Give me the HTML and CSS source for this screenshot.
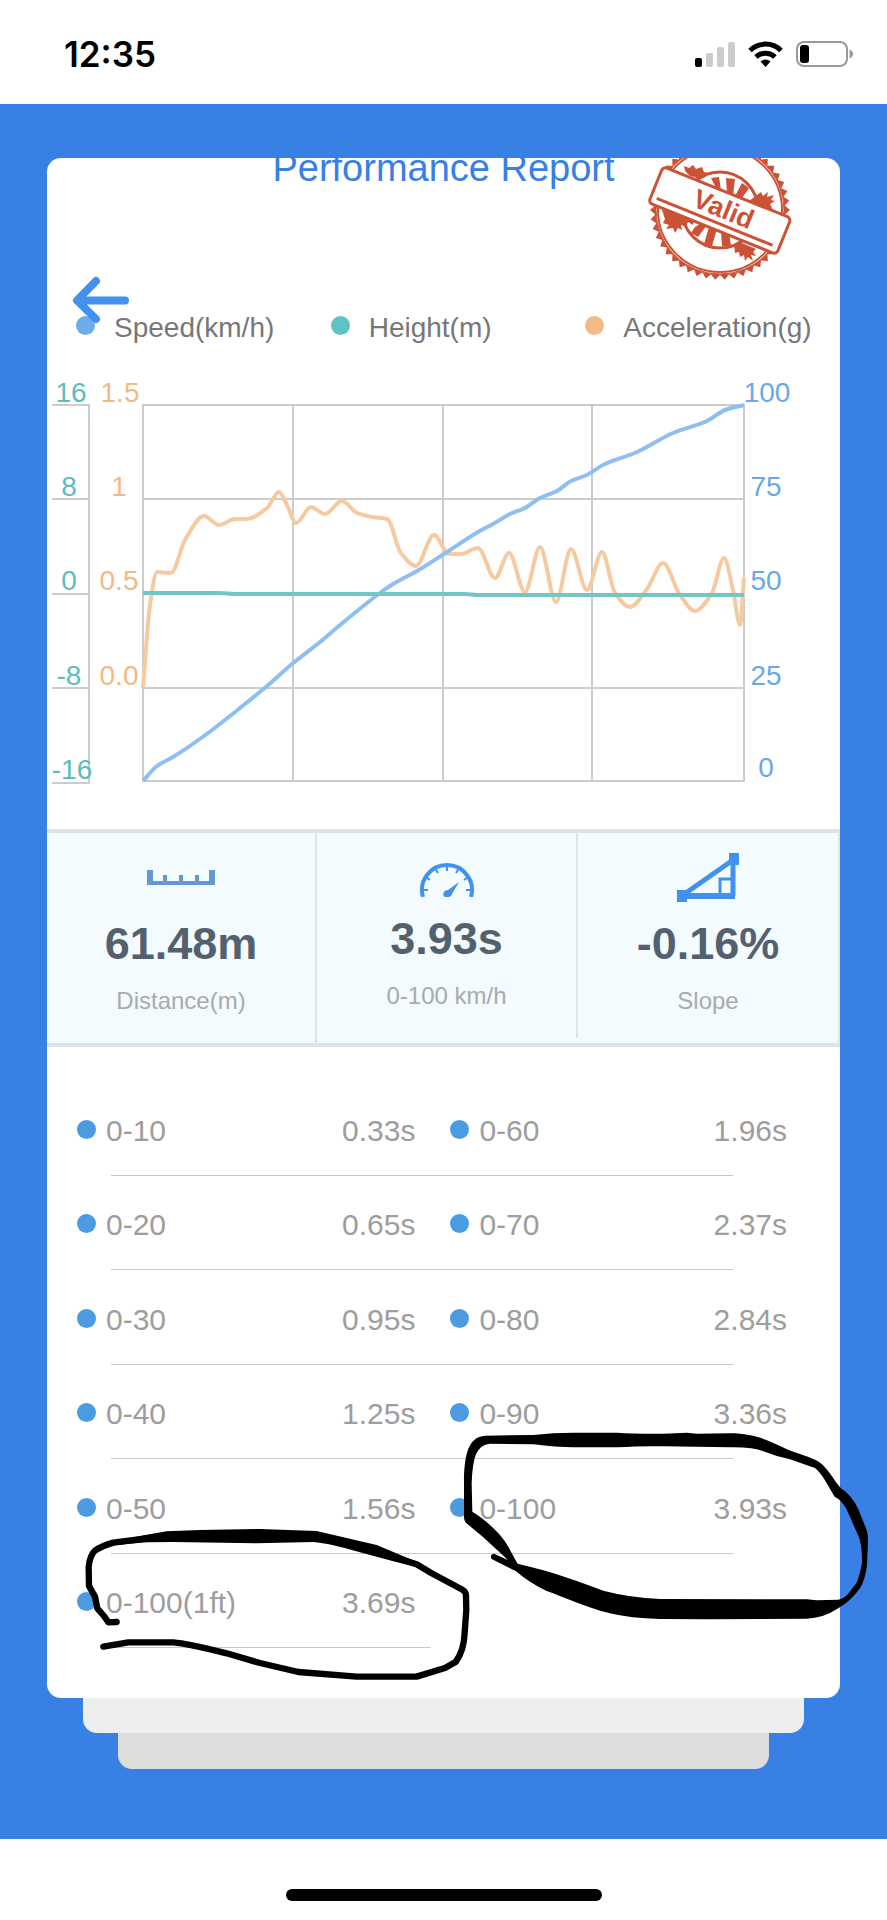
FILE: index.html
```html
<!DOCTYPE html>
<html lang="en">
<head>
    <meta charset="UTF-8">
    <meta name="viewport" content="width=device-width, initial-scale=1.0">
    <title>Performance Report</title>
    <link rel="stylesheet" href="styles.css">
</head>
<body>
    <div class="status-bar">
        <span class="time">12:35</span>
        <svg class="status-icons" width="160" height="28" viewBox="0 0 160 28" aria-hidden="true">
            <rect x="1" y="18" width="7" height="9" rx="2"/>
            <g fill="#ccc">
                <rect x="12" y="13" width="7" height="14" rx="2"/>
                <rect x="23" y="7" width="7" height="20" rx="2"/>
                <rect x="34" y="2" width="7" height="25" rx="2"/>
            </g>
            <g fill="none" stroke="#000" stroke-width="5">
                <path d="M56 10.500a22 22 0 0 1 31 0"/>
                <path d="M62 17a14 14 0 0 1 19 0"/>
            </g>
            <path d="M66.500 21.500a8 8 0 0 1 10 0L71.500 27z"/>
            <rect x="103" y="2" width="50" height="24" rx="7" fill="none" stroke="#999" stroke-width="2"/>
            <path d="M155.500 9.500q3.500 1.500 3.500 4.500t-3.500 4.500z" fill="#999"/>
            <rect x="106" y="5" width="9" height="18" rx="3"/>
        </svg>
    </div>

    <main class="screen">
        <div class="card">
            <header class="card-header">
                <h1>Performance Report</h1>
                <svg class="stamp" width="144" height="144" viewBox="-72 -72 144 144" role="img" aria-label="Valid">
                    <path id="stamp-edge" fill="#cc5237"/>
                    <g fill="none" stroke="#cc5237">
                        <circle r="64" fill="#fff" stroke-width="1"/>
                        <circle r="62" stroke-width="2"/>
                        <circle r="38" stroke-width="3"/>
                    </g>
                    <g fill="#cc5237">
                        <path d="M-9-32l8-1 2 13-5-2zM6-32l9 1-2 17-6-3zM22-27l7 5-9 13-6-3zM-25 17l8-5 4 3-9 12-7-4zM-11 17l8 2-5 17-8-2zM1 22h8l2 14H2z"/>
                        <path d="M-36-44l5 2 4-3 3 4 6-2 2 5 5 1-4 4-6 3-4-3-5-1-5-5zM37-15l4-3 2 4 5-4-1 5 7-2-3 5 4 1-5 3 3 6-4-1 1 8-6-3-11-5-4-8z"/>
                        <path d="M-58 0l8 1 12 5 12 4-1 5-5-3-2 5-5-2 1 5-4-2-3 5-2-5-7 1 3-4-6-2 2-4zM14 34l8-1 14 6-3 3 3 4-5-1 2 6-5-4-3 4-1-6-4 2-1-5-4 1z"/>
                    </g>
                    <g transform="rotate(22)">
                        <rect x="-69" y="-19" width="138" height="39" rx="4" fill="#fff" stroke="#cc5237" stroke-width="3"/>
                        <path d="M-63 13H62" stroke="#cc5237" stroke-width="3" fill="none"/>
                        <text class="stamp-text" x="3" y="7">Valid</text>
                    </g>
                </svg>
            </header>

            <button class="back" type="button" aria-label="Back">
                <svg width="58" height="50" viewBox="0 0 58 50" aria-hidden="true">
                    <path d="M24 5L5 24.500 24 43M6 24.500H53" fill="none" stroke="#4291ef" stroke-width="8" stroke-linecap="round" stroke-linejoin="round"/>
                </svg>
            </button>

            <ul class="legend">
                <li class="speed">Speed(km/h)</li>
                <li class="height">Height(m)</li>
                <li class="acceleration">Acceleration(g)</li>
            </ul>

            <svg class="chart" viewBox="0 0 793 469" role="img" aria-label="Speed, height and acceleration over time">
                <g class="grid">
                    <path d="M96 45H697V421H96zM246 45V421M396 45V421M545 45V421M96 139H697M96 234H697M96 328H697"/>
                    <path d="M5 45H42V423H5M5 139H42M5 234H42M5 328H42"/>
                </g>
                <g class="axis axis-height">
                    <text x="24" y="42">16</text>
                    <text x="22" y="136">8</text>
                    <text x="22" y="230">0</text>
                    <text x="22" y="325">-8</text>
                    <text x="25" y="419">-16</text>
                </g>
                <g class="axis axis-acceleration">
                    <text x="73" y="42">1.5</text>
                    <text x="72" y="136">1</text>
                    <text x="72" y="230">0.5</text>
                    <text x="72" y="325">0.0</text>
                </g>
                <g class="axis axis-speed">
                    <text x="720" y="42">100</text>
                    <text x="719" y="136">75</text>
                    <text x="719" y="230">50</text>
                    <text x="719" y="325">25</text>
                    <text x="719" y="417">0</text>
                </g>
                <path id="line-acceleration" class="line line-acceleration"/>
                <path id="line-speed" class="line line-speed"/>
                <path id="line-height" class="line line-height"/>
            </svg>

            <section class="stats">
                <div class="stat">
                    <svg width="68" height="50" viewBox="0 0 68 50" aria-hidden="true">
                        <path d="M3 31H65M18 23V31M34 23V31M50 23V31" fill="none" stroke="#6698d0" stroke-width="4"/>
                        <path d="M3 18V33M65 18V33" stroke="#6698d0" stroke-width="6"/>
                    </svg>
                    <strong>61.48m</strong>
                    <span>Distance(m)</span>
                </div>
                <div class="stat stat-main">
                    <svg width="56" height="45" viewBox="0 0 56 45" aria-hidden="true">
                        <path d="M4 45A25 25 0 1 1 52 45" fill="none" stroke="#4291ef" stroke-width="4"/>
                        <path d="M4 38H9M47 38H52M7 25L11 28M49 25L45 28M16 16L19 21M40 16L37 21M28 13V19" stroke="#4291ef" stroke-width="2"/>
                        <path d="M40 30L33 42Q32 45 30 45H26Q23 43 25 40Q26 38 29 38z" fill="#4291ef"/>
                    </svg>
                    <strong>3.93s</strong>
                    <span>0-100 km/h</span>
                </div>
                <div class="stat">
                    <svg width="62" height="50" viewBox="0 0 62 50" aria-hidden="true">
                        <path d="M6 43L56 8V44" fill="none" stroke="#4291ef" stroke-width="5"/>
                        <path d="M6 44H58" stroke="#4291ef" stroke-width="6"/>
                        <path d="M43 42V27H56" fill="none" stroke="#4291ef" stroke-width="3"/>
                        <path d="M52 1h10v12H52zM0 38h10v12H0z" fill="#4291ef"/>
                    </svg>
                    <strong>-0.16%</strong>
                    <span>Slope</span>
                </div>
            </section>

            <table class="times">
                <tbody>
                    <tr><th>0-10</th><td>0.33s</td><th>0-60</th><td>1.96s</td></tr>
                    <tr><th>0-20</th><td>0.65s</td><th>0-70</th><td>2.37s</td></tr>
                    <tr><th>0-30</th><td>0.95s</td><th>0-80</th><td>2.84s</td></tr>
                    <tr><th>0-40</th><td>1.25s</td><th>0-90</th><td>3.36s</td></tr>
                    <tr><th>0-50</th><td>1.56s</td><th>0-100</th><td>3.93s</td></tr>
                    <tr><th>0-100(1ft)</th><td>3.69s</td><td colspan="2"></td></tr>
                </tbody>
            </table>
        </div>
        <div class="sheet sheet-middle"></div>
        <div class="sheet sheet-back"></div>
    </main>

    <div class="home-area">
        <div class="home-indicator"></div>
    </div>

    <!-- Pen marks around the two 0-100 results -->
    <svg class="marks" viewBox="0 0 887 1920" aria-hidden="true">
        <g transform="translate(430 1400) scale(.3333)">
            <path fill-rule="evenodd" d="M102 350V250C102 165 115 110 165 107L310 105Q370 98 430 98L560 98Q620 102 700 101L770 98L800 101L900 100C1000 100 1040 140 1110 162Q1165 180 1178 194C1205 222 1215 245 1233 265Q1265 285 1285 328L1308 385Q1315 400 1314 430L1311 495Q1306 540 1290 565C1260 605 1240 615 1225 625Q1180 655 1130 656L830 658L690 657Q600 655 540 640C460 620 400 590 350 573Q300 550 258 514L185 477Q178 464 192 461L234 480Q190 440 160 412L112 372Q102 365 102 350zM127 335L125 250Q127 190 138 163Q150 134 180 131L310 133Q380 142 430 142H560Q640 137 700 139L900 142Q970 141 1000 154Q1040 170 1080 178L1155 204C1180 225 1195 260 1214 290Q1235 300 1250 328L1284 405Q1297 430 1296 490Q1288 530 1280 548L1254 582Q1245 594 1225 599L1160 601L1130 598L690 597Q600 593 520 572C460 550 370 515 263 491Q245 460 235 440C215 405 175 365 127 335z"/>
        </g>
        <g transform="translate(40 1500) scale(.3333)">
            <path d="M230 366L205 367L192 348L172 325L165 290L147 258L146 200Q150 165 165 152Q185 138 220 128L320 115L385 107L600 108L825 108L900 126L1000 145L1065 173L1130 193L1175 220L1265 268Q1278 275 1278 285L1279 330L1274 400Q1272 450 1248 485L1215 504L1130 530L950 530L775 516L660 489L560 460Q440 430 400 427H265L190 440" fill="none" stroke="#000" stroke-width="19" stroke-linecap="round" stroke-linejoin="round"/>
            <path d="M220 124L320 104L380 94L480 90L660 87L830 93L1010 135L1130 185L1120 199L1060 184L960 157Q870 130 820 126L650 130L400 126L320 127L220 136z"/>
        </g>
    </svg>

    <script src="chart.js"></script>
</body>
</html>
```
FILE: styles.css
```css
* {
    box-sizing: border-box;
}
body {
    position: relative;
    margin: 0;
    background-color: #fff;
    font-family: "Liberation Sans", Arial, sans-serif;
}
.status-bar {
    display: flex;
    justify-content: space-between;
    align-items: center;
    height: 104px;
    padding: 4px 33px 0 64px;
}
.time {
    font-family: Inter, sans-serif;
    font-size: 35px;
    font-weight: 600;
}
.screen {
    background-color: #3880e3;
    padding: 54px 47px 70px;
}
.card {
    position: relative;
    overflow: hidden;
    background-color: #fff;
    border-radius: 14px;
    padding-bottom: 50px;
}
.card-header {
    display: flow-root;
    height: 153px;
}
h1 {
    margin: -12px 0 0;
    color: #3880e3;
    font-size: 38px;
    font-weight: 400;
    line-height: 44px;
    text-align: center;
}
.stamp {
    position: absolute;
    top: -20px;
    right: 48px;
}
.stamp-text {
    fill: #cc5237;
    font-size: 27px;
    font-weight: 700;
    text-anchor: middle;
}
.back {
    position: absolute;
    top: 118px;
    left: 25px;
    padding: 0;
    border: none;
    background: none;
    line-height: 0;
    cursor: pointer;
}

/* Legend and chart */
.legend {
    display: grid;
    grid-template-columns: repeat(3, 1fr);
    margin: 0 0 16px;
    padding: 1px 0 0 29px;
    list-style: none;
    color: #777;
    font-size: 28px;
    line-height: 32px;
    white-space: nowrap;
}
.legend li::before {
    content: "";
    display: inline-block;
    width: 19px;
    height: 19px;
    margin-right: 19px;
    border-radius: 50%;
    vertical-align: 2px;
}
.speed::before {
    background-color: #6dace9;
}
.height::before {
    background-color: #5fc3c5;
}
.acceleration::before {
    background-color: #f3bb87;
}
.chart {
    display: block;
    width: 100%;
}
.grid {
    fill: none;
    stroke: #ccc;
    stroke-width: 2;
}
.axis {
    font-size: 28px;
    text-anchor: middle;
}
.axis-height {
    fill: #5bbdbd;
}
.axis-acceleration {
    fill: #f3b884;
}
.axis-speed {
    fill: #6ba8e5;
}
.line {
    fill: none;
    stroke-width: 4;
    stroke-linejoin: round;
}
.line-acceleration {
    stroke: #f6caa1;
}
.line-speed {
    stroke: #8fbff0;
}
.line-height {
    stroke: #74c6c6;
}

/* Summary */
.stats {
    display: grid;
    grid-template-columns: 270fr 261fr 262fr;
    border-top: 4px solid #dbe4e7;
    border-bottom: 4px solid #dbe4e7;
    background-color: #f3fbfe;
}
.stat {
    display: flex;
    flex-direction: column;
    align-items: center;
    padding: 19px 0 28px;
    border-right: 2px solid #dbe4e7;
}
.stat-main {
    margin-bottom: 5px;
}
.stat strong {
    margin-top: 18px;
    color: #53616f;
    font-size: 45px;
    line-height: 48px;
}
.stat span {
    margin-top: 19px;
    color: #aaa;
    font-size: 24px;
    line-height: 28px;
}

/* Split times */
.times {
    width: calc(100% - 83px);
    height: 567px;
    margin: 34px 53px 0 30px;
    border-collapse: collapse;
    table-layout: fixed;
    color: #9d9d9d;
    font-size: 30px;
    line-height: 36px;
    white-space: nowrap;
}
.times tr {
    background: linear-gradient(#c8c8c8, #c8c8c8) 34px 100% / calc(100% - 88px) 1px no-repeat;
}
.times tr:last-child {
    background-size: calc(50% - 35px) 1px;
}
.times th {
    padding: 5px 0 0;
    font-weight: 400;
    text-align: left;
}
.times th:first-child {
    width: 24%;
}
.times th::before {
    content: "";
    display: inline-block;
    width: 19px;
    height: 19px;
    margin-right: 10px;
    border-radius: 50%;
    background-color: #4a9be1;
    vertical-align: 2px;
}
.times th:nth-child(3) {
    padding-left: 35px;
}
.times td {
    width: 168px;
    padding: 5px 0 0;
    text-align: right;
}

/* Sheets stacked under the card */
.sheet {
    border-radius: 0 0 14px 14px;
}
.sheet-middle {
    height: 35px;
    margin: 0 36px;
    background-color: #eee;
}
.sheet-back {
    height: 36px;
    margin: 0 71px;
    background-color: #ddd;
}
.home-area {
    height: 81px;
    padding-top: 50px;
}
.home-indicator {
    width: 316px;
    height: 12px;
    margin: 0 auto;
    border-radius: 6px;
    background-color: #000;
}
.marks {
    position: absolute;
    top: 0;
    left: 0;
    width: 100%;
    pointer-events: none;
}
```
FILE: chart.js
```js
// Points in chart coordinates
const acceleration = [
    [96, 328], [103, 245], [110, 212], [124, 213], [138, 180], [157, 156], [172, 165], [188, 159],
    [200, 159], [220, 148], [232, 132], [240, 145], [249, 163], [264, 147], [278, 154],
    [295, 141], [310, 153], [325, 157], [340, 159], [354, 193], [369, 206], [387, 175], [402, 194],
    [414, 194], [431, 188], [448, 218], [462, 193], [478, 232], [493, 187], [509, 242],
    [524, 189], [540, 230], [555, 192], [568, 233], [583, 247], [600, 229], [616, 203],
    [633, 235], [648, 251], [665, 233], [677, 198], [686, 230], [693, 265], [697, 218]
];
const speed = [
    [96, 421], [110, 406], [126, 397], [157, 376], [193, 348], [220, 326], [245, 304],
    [273, 282], [293, 265], [333, 233], [346, 224], [370, 211], [400, 192], [431, 172],
    [446, 164], [463, 154], [478, 148], [493, 138], [510, 131], [524, 121], [540, 115],
    [556, 105], [590, 92], [626, 73], [660, 61], [678, 50], [697, 45]
];
const height = [[96, 233], [173, 233], [188, 234], [418, 234], [430, 235], [697, 235]];

// Smooth line through all the points, flat at peaks and dips
function smoothPath(points) {
    const slopes = points.map((point, i) => {
        const prev = points[i - 1];
        const next = points[i + 1];
        if (!prev) return (next[1] - point[1]) / (next[0] - point[0]);
        if (!next) return (point[1] - prev[1]) / (point[0] - prev[0]);
        const before = (point[1] - prev[1]) / (point[0] - prev[0]);
        const after = (next[1] - point[1]) / (next[0] - point[0]);
        return before * after <= 0 ? 0 : 2 * before * after / (before + after);
    });
    let d = `M${points[0]}`;
    for (let i = 0; i < points.length - 1; i++) {
        const [x1, y1] = points[i];
        const [x2, y2] = points[i + 1];
        const step = (x2 - x1) / 3;
        d += `C${x1 + step} ${y1 + slopes[i] * step} ${x2 - step} ${y2 - slopes[i + 1] * step} ${x2} ${y2}`;
    }
    return d;
}

document.getElementById('line-acceleration').setAttribute('d', smoothPath(acceleration));
document.getElementById('line-speed').setAttribute('d', smoothPath(speed));
document.getElementById('line-height').setAttribute('d', smoothPath(height));

// Toothed edge of the stamp
const teeth = 46;
const edge = [];
for (let i = 0; i < teeth * 2; i++) {
    const radius = i % 2 ? 65 : 70;
    const angle = Math.PI * i / teeth;
    edge.push([radius * Math.cos(angle), radius * Math.sin(angle)]);
}
document.getElementById('stamp-edge').setAttribute('d', `M${edge.join('L')}z`);
```
